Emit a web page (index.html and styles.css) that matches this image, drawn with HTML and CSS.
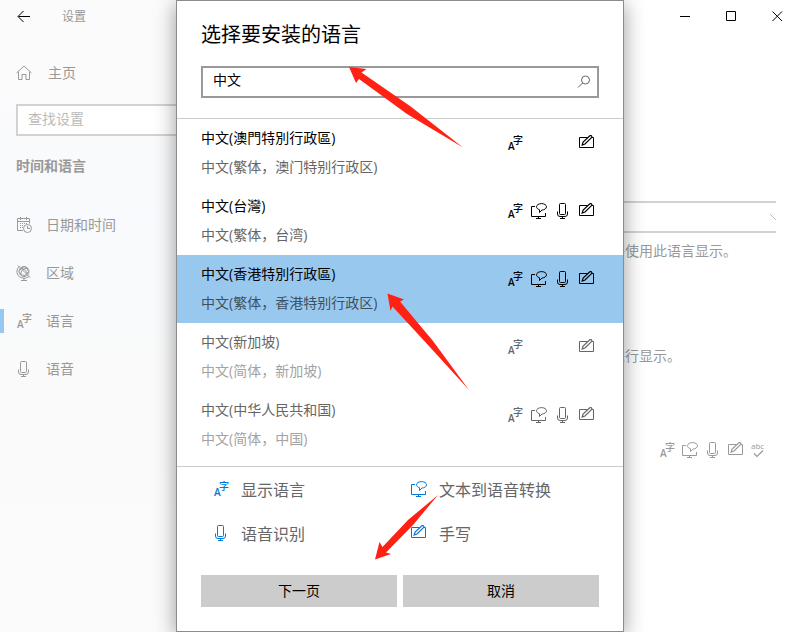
FILE: index.html
```html
<!DOCTYPE html>
<html lang="zh-CN">
<head>
  <meta charset="UTF-8" />
  <meta name="viewport" content="width=device-width, initial-scale=1.0" />
  <title>设置</title>
  <link rel="stylesheet" href="styles.css">
</head>
<body>
  <!-- shared icons -->
  <svg class="sprite" aria-hidden="true">
    <symbol id="i-display" viewBox="0 0 16 16">
      <text class="glyph-a" x="1" y="15">A</text>
      <text class="glyph-zi" x="6" y="9">字</text>
    </symbol>
    <symbol id="i-tts" viewBox="0 0 16 16">
      <path d="M4 3.500H.5v10h14V10M7.500 13.500v2M5 15.500h5" />
      <path d="M8.500 6.700C6.500 6.200 5.500 5 5.500 3.800 5.500 2 7.700.6 10.500.6s5 1.400 5 3.200-2.200 3.200-4.500 3.200L8.500 9.500z" />
    </symbol>
    <symbol id="i-mic" viewBox="0 0 16 16">
      <rect x="4.500" y=".5" width="6" height="11" rx="1" />
      <path d="M2.500 8.500v2.500q0 2.500 2.500 2.500h5q2.500 0 2.500-2.500V8.500M7.500 13.500v2M5 15.500h5" />
    </symbol>
    <symbol id="i-pen" viewBox="0 0 16 16">
      <path d="M8.500 2.500H.5v10h14v-10h-2" />
      <path class="pencil" d="M3.200 10l.9-3L10.800.8q1-.6 1.700.1t0 1.700L6 9z" />
    </symbol>
    <symbol id="i-spell" viewBox="0 0 16 16">
      <text class="glyph-abc" x="0" y="7">abc</text>
      <path class="pencil" d="M3 11.500l3 3 6-6" />
    </symbol>
  </svg>

  <div class="settings">
    <aside class="sidebar">
      <div class="title-bar">
        <button class="back" aria-label="返回">
          <svg width="14" height="14" viewBox="0 0 14 14"><path d="M13 6.500H1.500M6.500 1L1 6.500 6.500 12" /></svg>
        </button>
        <span>设置</span>
      </div>
      <a class="nav-item home" href="#">
        <svg class="icon" viewBox="0 0 16 16"><path d="M.5 8L8 1l7.500 7M2.500 6.500v8h3.500V9.500h4v5h3.500v-8" /></svg>
        主页
      </a>
      <input class="find" type="text" placeholder="查找设置" aria-label="查找设置">
      <h2>时间和语言</h2>
      <nav>
        <a class="nav-item" href="#">
          <svg class="icon" viewBox="0 0 16 16">
            <path d="M7 13.500H1.500v-12h12v5M1.500 4.500h12M4.500 0v3M10.500 0v3" />
            <path class="dots" d="M4 6.500h7M4 8.500h4M4 10.500h4" />
            <circle cx="11.500" cy="11.500" r="4" /><path d="M11.500 9v2.500H14" />
          </svg>
          日期和时间
        </a>
        <a class="nav-item" href="#">
          <svg class="icon" viewBox="0 0 16 16">
            <circle cx="8" cy="6.500" r="5" /><path d="M3 1.500C-1 6 1 13 8 13.200c2.500 0 4.500-1 5.500-2.200M2 .5l12 12M8 13v2.500M5 15.500h6" />
            <path d="M5 3q5 1 6.500 6.500M4 8q2 2.500 5 2.500M8 1.500q4 2 4.500 5M11.500 3Q5 4 4.500 9.500M8 11.500q3-3 4.500-5M3 6.500q2-3.500 5-5" />
          </svg>
          区域
        </a>
        <a class="nav-item current" href="#">
          <svg class="icon"><use href="#i-display" /></svg>
          语言
        </a>
        <a class="nav-item" href="#">
          <svg class="icon"><use href="#i-mic" /></svg>
          语音
        </a>
      </nav>
    </aside>

    <main>
      <div class="window-buttons">
        <button aria-label="最小化"><svg width="11" height="11" viewBox="0 0 11 11"><path d="M0 5.500h10" /></svg></button>
        <button aria-label="最大化"><svg width="11" height="11" viewBox="0 0 11 11"><path d="M.5.5h9v9h-9z" /></svg></button>
        <button aria-label="关闭"><svg width="11" height="11" viewBox="0 0 11 11"><path d="M.5.5l9.500 9.500M10 .5L.5 10" /></svg></button>
      </div>
      <div class="combo">
        <select aria-label="显示语言"></select>
        <svg width="6" height="8" viewBox="0 0 6 8"><path d="M0 1l6 6" /></svg>
      </div>
      <p class="note">将使用此语言显示。</p>
      <p class="note second">进行显示。</p>
      <div class="features">
        <svg class="icon"><use href="#i-display" /></svg>
        <svg class="icon"><use href="#i-tts" /></svg>
        <svg class="icon"><use href="#i-mic" /></svg>
        <svg class="icon"><use href="#i-pen" /></svg>
        <svg class="icon"><use href="#i-spell" /></svg>
      </div>
    </main>
  </div>

  <div class="overlay">
    <section class="dialog" role="dialog" aria-labelledby="dialog-title">
      <h1 id="dialog-title">选择要安装的语言</h1>
      <div class="search">
        <input type="text" value="中文" aria-label="搜索语言">
        <svg width="14" height="14" viewBox="0 0 14 14"><circle cx="8.500" cy="5" r="4" /><path d="M5.500 8L1 12.500" /></svg>
      </div>

      <ul class="languages">
        <li>
          <button class="language">
            <span class="name" lang="zh-TW">中文(澳門特別行政區)</span>
            <span class="local">中文(繁体，澳门特别行政区)</span>
            <span class="marks">
              <svg class="icon"><use href="#i-display" /></svg>
              <svg class="icon last"><use href="#i-pen" /></svg>
            </span>
          </button>
        </li>
        <li>
          <button class="language">
            <span class="name" lang="zh-TW">中文(台灣)</span>
            <span class="local">中文(繁体，台湾)</span>
            <span class="marks">
              <svg class="icon"><use href="#i-display" /></svg>
              <svg class="icon"><use href="#i-tts" /></svg>
              <svg class="icon"><use href="#i-mic" /></svg>
              <svg class="icon"><use href="#i-pen" /></svg>
            </span>
          </button>
        </li>
        <li>
          <button class="language selected">
            <span class="name" lang="zh-TW">中文(香港特別行政區)</span>
            <span class="local">中文(繁体，香港特别行政区)</span>
            <span class="marks">
              <svg class="icon"><use href="#i-display" /></svg>
              <svg class="icon"><use href="#i-tts" /></svg>
              <svg class="icon"><use href="#i-mic" /></svg>
              <svg class="icon"><use href="#i-pen" /></svg>
            </span>
          </button>
        </li>
        <li>
          <button class="language" disabled>
            <span class="name">中文(新加坡)</span>
            <span class="local">中文(简体，新加坡)</span>
            <span class="marks">
              <svg class="icon"><use href="#i-display" /></svg>
              <svg class="icon last"><use href="#i-pen" /></svg>
            </span>
          </button>
        </li>
        <li>
          <button class="language" disabled>
            <span class="name">中文(中华人民共和国)</span>
            <span class="local">中文(简体，中国)</span>
            <span class="marks">
              <svg class="icon"><use href="#i-display" /></svg>
              <svg class="icon"><use href="#i-tts" /></svg>
              <svg class="icon"><use href="#i-mic" /></svg>
              <svg class="icon"><use href="#i-pen" /></svg>
            </span>
          </button>
        </li>
      </ul>

      <ul class="legend">
        <li><svg class="icon"><use href="#i-display" /></svg>显示语言</li>
        <li><svg class="icon"><use href="#i-tts" /></svg>文本到语音转换</li>
        <li><svg class="icon"><use href="#i-mic" /></svg>语音识别</li>
        <li><svg class="icon"><use href="#i-pen" /></svg>手写</li>
      </ul>

      <div class="actions">
        <button>下一页</button>
        <button>取消</button>
      </div>

      <!-- red pointers: search box, Hong Kong row, next button -->
      <svg class="pointers" width="446" height="630" viewBox="177 1 446 630" aria-hidden="true">
        <path d="M349 67l17.500 2-5 3.500L410 106l53 41.500L407 114l-48-35-3 4z" />
        <path d="M387.500 293.500l16.500 6-4 2L433 341l36 49-41-45-35.500-38.500-2 4.500z" />
        <path d="M375 559.500l4.500-17.500 3 5L408 520l30-25-25 30-27 27.500 5 1.500z" />
      </svg>
    </section>
  </div>
</body>
</html>
```
FILE: styles.css
```css
:root {
  --accent: #0078d7;
  --selected: #99c8ee;
  --faded: #999;
}

* {
  box-sizing: border-box;
}

body {
  margin: 0;
  background: #fff;
  font-family: "Open Sans", "Noto Sans CJK SC", sans-serif;
  font-size: 14px;
  font-weight: 400;
  line-height: 20px;
  color: #000;
}

[lang="zh-TW"] {
  font-family: "Open Sans", "Noto Sans CJK TC", sans-serif;
}

button,
input,
select {
  font: inherit;
  color: inherit;
  border: 0;
  border-radius: 0;
  background: none;
  padding: 0;
}

ul {
  list-style: none;
  margin: 0;
  padding: 0;
}

svg {
  fill: none;
  stroke: currentColor;
  stroke-width: 1;
}

svg text {
  fill: currentColor;
  stroke: none;
}

.sprite {
  display: none;
}

.icon {
  width: 16px;
  height: 16px;
  flex: none;
}

.glyph-a {
  font-size: 10px;
  font-weight: 600;
}

.glyph-zi {
  font-size: 10px;
  font-weight: 500;
}

.glyph-abc {
  font-size: 8px;
}

.pencil {
  stroke-width: 1.2;
}

/* settings window */
.settings {
  display: grid;
  grid-template-columns: 1fr 189px;
  min-height: 100vh;
  color: var(--faded);
}

.sidebar {
  background: linear-gradient(#fbfbfb, #f9fafd 35%, #fafafa 60%, #fbfbfb);
}

.title-bar {
  display: flex;
  align-items: center;
  gap: 31px;
  height: 34px;
  padding-left: 17px;
  font-size: 12px;
}

.back {
  display: flex;
  color: #000;
}

.nav-item {
  display: flex;
  align-items: center;
  gap: 14px;
  height: 48px;
  padding-left: 16px;
  color: inherit;
  text-decoration: none;
}

.home {
  margin-top: 15px;
  gap: 16px;
}

.dots {
  stroke-dasharray: 1 1;
}

.current {
  background: linear-gradient(var(--selected), var(--selected)) no-repeat left center / 4px 24px;
}

.find {
  display: block;
  width: calc(100% - 32px);
  height: 32px;
  margin: 7px 16px 20px;
  padding: 0 10px 4px;
  border: 2px solid #d2d2d2;
  background: #fff;
}

.find::placeholder {
  color: #bbb;
  opacity: 1;
}

h2 {
  margin: 0 16px 25px;
  font-size: 14px;
  font-weight: 700;
}

.window-buttons {
  display: flex;
  justify-content: flex-end;
  color: #000;
}

.window-buttons button {
  display: flex;
  align-items: center;
  justify-content: center;
  width: 46px;
  height: 32px;
}

.combo {
  display: flex;
  align-items: center;
  height: 32px;
  margin: 169px 24px 8px 0;
  border: solid #d2d2d2;
  border-width: 2px 0;
}

.combo select {
  flex: 1;
  height: 100%;
  appearance: none;
}

.combo svg {
  color: #bbb;
}

.note {
  margin: 0;
}

.second {
  margin-top: 85px;
}

.features {
  display: flex;
  gap: 7px;
  margin: 76px 0 0 48px;
}

/* dialog */
.overlay {
  position: absolute;
  inset: 0;
  display: flex;
  justify-content: center;
  align-items: center;
  overflow: hidden;
}

.dialog {
  position: relative;
  width: 448px;
  border: 1px solid #8c8c8c;
  background: #fff;
  box-shadow: 0 4px 20px rgba(0, 0, 0, 0.4);
}

h1 {
  margin: 20px 24px 17px;
  font-size: 20px;
  font-weight: 400;
  line-height: 28px;
}

.search {
  display: flex;
  align-items: center;
  height: 32px;
  margin: 0 24px 20px;
  padding: 0 6px 0 10px;
  border: 2px solid #999;
}

.search input {
  flex: 1;
  min-width: 0;
  height: 22px;
  margin-bottom: 6px;
  outline: none;
}

.search svg {
  color: #666;
}

.languages {
  padding-bottom: 7px;
  border: solid #ccc;
  border-width: 1px 0;
}

.language {
  display: grid;
  grid-template-columns: 1fr auto;
  row-gap: 9px;
  width: 100%;
  padding: 9px 28px 10px 24px;
  text-align: left;
}

.local {
  grid-column: 1;
  color: #666;
}

.marks {
  grid-area: 1 / 2;
  display: grid;
  grid-template-columns: repeat(4, 16px);
  gap: 8px;
  padding-top: 7px;
  height: 20px;
}

.marks .last {
  grid-column: 4;
}

.selected {
  background: var(--selected);
}

.selected .local {
  color: #3d5060;
}

.language:disabled {
  color: #666;
}

.language:disabled .local {
  color: #a3a3a3;
}

.legend {
  display: grid;
  grid-template-columns: 1fr 1fr;
  row-gap: 24px;
  padding: 13px 14px 31px 36px;
  font-size: 16px;
  color: #666;
}

.legend li {
  display: flex;
  align-items: center;
  gap: 12px;
}

.legend .icon {
  margin-bottom: 2px;
  color: var(--accent);
}

.actions {
  display: grid;
  grid-template-columns: 1fr 1fr;
  gap: 6px;
  padding: 0 24px 24px;
}

.actions button {
  height: 32px;
  background: #ccc;
}

.pointers {
  position: absolute;
  top: 0;
  left: 0;
  fill: #ff2114;
  stroke: none;
  pointer-events: none;
}
```
